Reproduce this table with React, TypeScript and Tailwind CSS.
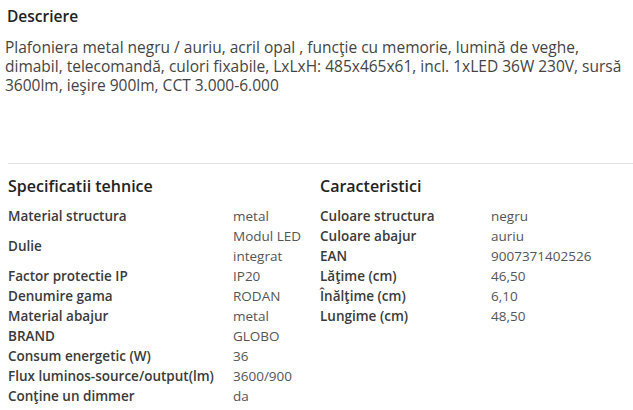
const LEFT: [string, string[]][] = [
  ["Material structura", ["metal"]],
  ["Dulie", ["Modul LED", "integrat"]],
  ["Factor protectie IP", ["IP20"]],
  ["Denumire gama", ["RODAN"]],
  ["Material abajur", ["metal"]],
  ["BRAND", ["GLOBO"]],
  ["Consum energetic (W)", ["36"]],
  ["Flux luminos-source/output(lm)", ["3600/900"]],
  ["Conţine un dimmer", ["da"]],
];

const RIGHT: [string, string[]][] = [
  ["Culoare structura", ["negru"]],
  ["Culoare abajur", ["auriu"]],
  ["EAN", ["9007371402526"]],
  ["Lăţime (cm)", ["46,50"]],
  ["Înălţime (cm)", ["6,10"]],
  ["Lungime (cm)", ["48,50"]],
];

function SpecTable({ title, rows, labelW }: { title: string; rows: [string, string[]][]; labelW: string }) {
  return (
    <div className="flex-1">
      <h3 className="text-[16px] font-semibold leading-[20px] text-[#222]">{title}</h3>
      <div className="mt-[10px] flex flex-col">
        {rows.map(([label, value]) => (
          <div key={label} className="flex items-center text-[13.5px] leading-[20px]">
            <div className={`${labelW} shrink-0 font-semibold text-[#3a3a3a]`}>{label}</div>
            <div className="text-[#555]">
              {value.map((v) => (
                <div key={v}>{v}</div>
              ))}
            </div>
          </div>
        ))}
      </div>
    </div>
  );
}

export default function App() {
  return (
    <div className="h-[410px] w-[633px] overflow-hidden bg-white font-['Open_Sans',sans-serif]">
      <div className="px-[7px] pt-[5px]">
        <h2 className="text-[15.5px] font-semibold leading-[22px] text-[#222]">Descriere</h2>
        <p className="-ml-[2px] mt-[11px] text-[15.5px] leading-[19px] text-[#444]">
          Plafoniera metal negru / auriu, acril opal , funcţie cu memorie, lumină de veghe,
          dimabil, telecomandă, culori fixabile, LxLxH: 485x465x61, incl. 1xLED 36W 230V, sursă
          3600lm, ieşire 900lm, CCT 3.000-6.000
        </p>
      </div>
      <div className="ml-[8px] mt-[68px] border-t border-[#e2e2e2]" />
      <div className="flex pl-[8px] pt-[12px]">
        <div className="w-[312px]">
          <SpecTable title="Specificatii tehnice" rows={LEFT} labelW="w-[225px]" />
        </div>
        <div className="flex-1">
          <SpecTable title="Caracteristici" rows={RIGHT} labelW="w-[171px]" />
        </div>
      </div>
    </div>
  );
}
